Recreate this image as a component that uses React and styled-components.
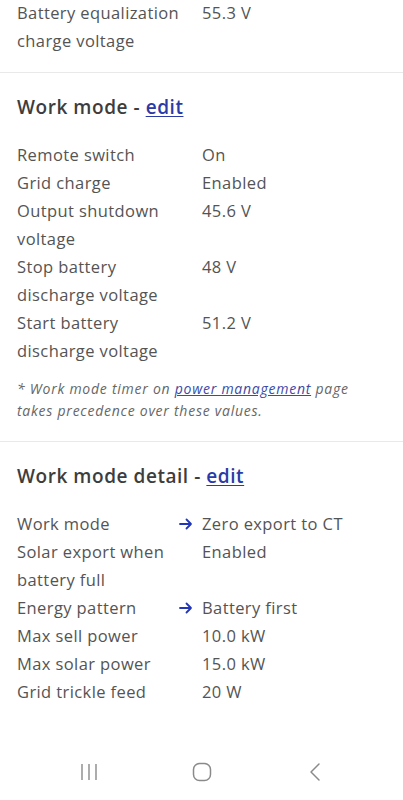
import React from 'react';
import styled, { createGlobalStyle } from 'styled-components';

const GlobalStyle = createGlobalStyle`
  html, body {
    margin: 0;
    padding: 0;
    background: #fff;
  }
  body {
    font-family: "Open Sans", "Liberation Sans", sans-serif;
    color: #545454;
  }
`;

const Page = styled.div`
  width: 403px;
  height: 800px;
  display: flex;
  flex-direction: column;
  overflow: hidden;
  background: #fff;
`;

const Content = styled.div`
  flex: 1;
  margin-top: -1px;
`;

const Section = styled.section`
  padding: ${p => (p.$first ? '0' : '20px')} 17px ${p => p.$bottom || '17px'};
  border-bottom: ${p => (p.$last ? 'none' : '1px solid #e9e9e9')};
`;

const Heading = styled.h2`
  margin: 0 0 20px;
  font-size: 19px;
  font-weight: 600;
  line-height: 28px;
  color: #3d3d3d;
  letter-spacing: 0.55px;
`;

const EditLink = styled.a`
  color: #2b3aa6;
  text-decoration: underline;
  text-underline-offset: 2px;
`;

const Table = styled.div`
  display: grid;
  grid-template-columns: 185px 1fr;
  font-size: 16.5px;
  line-height: 28px;
  letter-spacing: 0.4px;
`;

const Label = styled.div`
  padding-right: 12px;
`;

const Value = styled.div`
  display: flex;
  align-items: center;
  height: 28px;
`;

const Arrow = styled.span`
  margin-left: -23px;
  width: 23px;
  display: flex;
  align-items: center;
`;

const Note = styled.p`
  margin: 13px 0 0;
  font-size: 14px;
  font-style: italic;
  line-height: 22px;
  color: #666;
  letter-spacing: 0.75px;
  padding-right: 10px;
`;

const NoteLink = styled.a`
  color: #3b4aa8;
  text-decoration: underline;
`;

const NavBar = styled.nav`
  height: 56px;
  display: flex;
  align-items: center;
  justify-content: space-between;
  padding: 2px 68px 0 69px;
`;

const NavBtn = styled.div`
  width: 40px;
  display: flex;
  justify-content: center;
  color: #8a8a8a;
`;

const ArrowIcon = () => (
  <svg width="14" height="12" viewBox="0 0 14 12">
    <path d="M1 6h11M7.5 1.5 12 6l-4.5 4.5" fill="none" stroke="#2136b8" strokeWidth="1.8" strokeLinecap="round" strokeLinejoin="round" />
  </svg>
);

const Row = ({ label, value, arrow }) => (
  <>
    <Label>{label}</Label>
    <Value>
      {arrow && <Arrow><ArrowIcon /></Arrow>}
      {value}
    </Value>
  </>
);

export default function App() {
  return (
    <Page>
      <GlobalStyle />
      <Content>
        <Section $first>
          <Table>
            <Row label="Battery equalization charge voltage" value="55.3 V" />
          </Table>
        </Section>

        <Section $bottom="19px">
          <Heading>Work mode - <EditLink href="#">edit</EditLink></Heading>
          <Table>
            <Row label="Remote switch" value="On" />
            <Row label="Grid charge" value="Enabled" />
            <Row label="Output shutdown voltage" value="45.6 V" />
            <Row label="Stop battery discharge voltage" value="48 V" />
            <Row label="Start battery discharge voltage" value="51.2 V" />
          </Table>
          <Note>
            * Work mode timer on <NoteLink href="#">power management</NoteLink> page takes precedence over these values.
          </Note>
        </Section>

        <Section $last>
          <Heading>Work mode detail - <EditLink href="#">edit</EditLink></Heading>
          <Table>
            <Row label="Work mode" value="Zero export to CT" arrow />
            <Row label="Solar export when battery full" value="Enabled" />
            <Row label="Energy pattern" value="Battery first" arrow />
            <Row label="Max sell power" value="10.0 kW" />
            <Row label="Max solar power" value="15.0 kW" />
            <Row label="Grid trickle feed" value="20 W" />
          </Table>
        </Section>
      </Content>

      <NavBar>
        <NavBtn>
          <svg width="18" height="18" viewBox="0 0 18 18">
            <path d="M2 1v16M9 1v16M16 1v16" stroke="currentColor" strokeWidth="1.4" fill="none" />
          </svg>
        </NavBtn>
        <NavBtn>
          <svg width="20" height="20" viewBox="0 0 20 20">
            <rect x="1.5" y="1.5" width="17" height="17" rx="6" stroke="currentColor" strokeWidth="1.5" fill="none" />
          </svg>
        </NavBtn>
        <NavBtn>
          <svg width="14" height="20" viewBox="0 0 14 20">
            <path d="M11 2 3 10l8 8" stroke="currentColor" strokeWidth="1.5" fill="none" strokeLinecap="round" strokeLinejoin="round" />
          </svg>
        </NavBtn>
      </NavBar>
    </Page>
  );
}
